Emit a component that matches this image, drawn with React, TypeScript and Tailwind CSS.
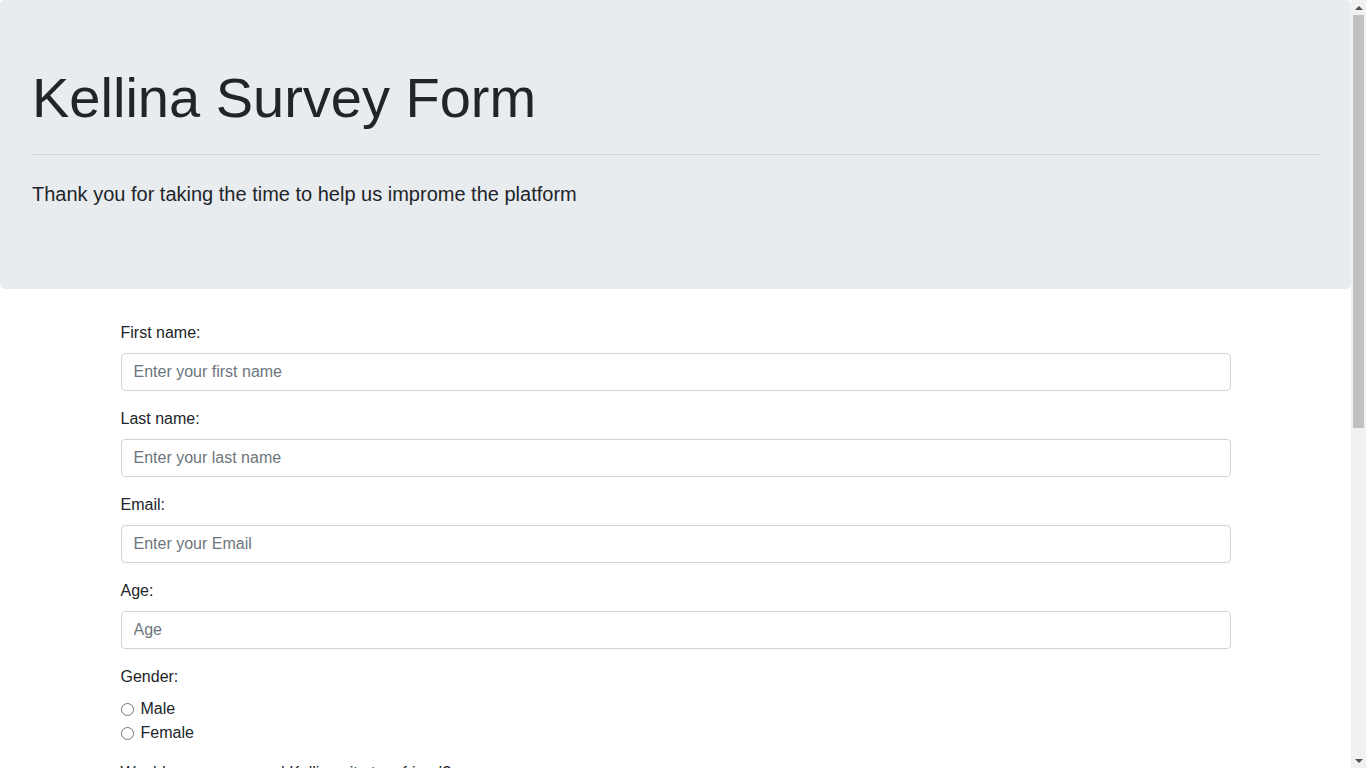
import { useState } from "react";

const inputClass =
    "block w-full h-[38px] px-3 py-1.5 text-base leading-6 text-[#495057] bg-white border border-[#ced4da] rounded-[4px] placeholder:text-[#6c757d] outline-none";

function Field({ label, placeholder, type = "text" }: { label: string; placeholder: string; type?: string }) {
    return (
        <div className="mb-4">
            <label className="inline-block mb-2 leading-6">{label}</label>
            <input type={type} placeholder={placeholder} className={inputClass} />
        </div>
    );
}

function Choice({ name, label, type = "radio" }: { name: string; label: string; type?: string }) {
    return (
        <div className="flex items-center h-6 leading-6">
            <input type={type} name={name} className="w-[13px] h-[13px] m-0 mr-[7px] accent-[#0075ff]" />
            <label>{label}</label>
        </div>
    );
}

// classic scrollbar on the right edge
function ScrollBar() {
    return (
        <div className="w-[15px] shrink-0 bg-[#f1f1f1] flex flex-col">
            <div className="h-[15px] flex items-center justify-center">
                <div className="w-0 h-0 border-x-[4px] border-x-transparent border-b-[4px] border-b-[#505050]" />
            </div>
            <div className="mx-[2px] h-[413px] bg-[#c1c1c1]" />
            <div className="flex-1" />
            <div className="h-[15px] flex items-center justify-center">
                <div className="w-0 h-0 border-x-[4px] border-x-transparent border-t-[4px] border-t-[#505050]" />
            </div>
        </div>
    );
}

export default function App() {
    const [feature, setFeature] = useState("");

    return (
        <div className="flex h-screen overflow-hidden bg-white text-[#212529] text-base font-['Liberation_Sans',Arial,sans-serif]">
            <div className="flex-1 min-w-0 overflow-y-auto [scrollbar-width:none]">
                <div className="bg-[#e9ecef] rounded-[5px] px-8 pt-16 pb-16 mb-8">
                    <h1 className="text-[56px] leading-[67px] font-light mb-2">Kellina Survey Form</h1>
                    <hr className="mt-[23px] mb-6 border-0 border-t border-[rgba(0,0,0,0.1)]" />
                    <p className="text-[20px] leading-[30px] font-light mb-4">
                        Thank you for taking the time to help us improme the platform
                    </p>
                </div>

                <div className="max-w-[1140px] mx-auto px-[15px] pb-12">
                    <form onSubmit={(e) => e.preventDefault()}>
                        <Field label="First name:" placeholder="Enter your first name" />
                        <Field label="Last name:" placeholder="Enter your last name" />
                        <Field label="Email:" placeholder="Enter your Email" type="email" />
                        <Field label="Age:" placeholder="Age" type="number" />

                        <div className="mb-4">
                            <label className="inline-block mb-2 leading-6">Gender:</label>
                            <Choice name="gender" label="Male" />
                            <Choice name="gender" label="Female" />
                        </div>

                        <div className="mb-4">
                            <label className="inline-block mb-2 leading-6">Would you recommend Kellina site to a friend?</label>
                            <Choice name="recommend" label="Definitely" />
                            <Choice name="recommend" label="Maybe" />
                            <Choice name="recommend" label="Not sure" />
                        </div>

                        <div className="mb-4">
                            <label className="inline-block mb-2 leading-6">What is your favorite feature of Kellina?</label>
                            <select
                                value={feature}
                                onChange={(e) => setFeature(e.target.value)}
                                className={inputClass}
                            >
                                <option value="">Select an option</option>
                                <option value="challenges">Challenges</option>
                                <option value="projects">Projects</option>
                                <option value="community">Community</option>
                                <option value="forum">Forum</option>
                            </select>
                        </div>

                        <div className="mb-4">
                            <label className="inline-block mb-2 leading-6">What would you like to see improved?</label>
                            <Choice type="checkbox" name="improve" label="Front-end Projects" />
                            <Choice type="checkbox" name="improve" label="Back-end Projects" />
                            <Choice type="checkbox" name="improve" label="Data Visualization" />
                            <Choice type="checkbox" name="improve" label="Challenges" />
                            <Choice type="checkbox" name="improve" label="Open Source Community" />
                        </div>

                        <div className="mb-4">
                            <label className="inline-block mb-2 leading-6">Any comments or suggestions?</label>
                            <textarea
                                rows={3}
                                placeholder="Enter your comment here..."
                                className="block w-full px-3 py-1.5 text-base leading-6 text-[#495057] border border-[#ced4da] rounded-[4px] placeholder:text-[#6c757d] outline-none"
                            />
                        </div>

                        <button
                            type="submit"
                            className="px-3 py-1.5 leading-6 text-white bg-[#007bff] border border-[#007bff] rounded-[4px]"
                        >
                            Submit
                        </button>
                    </form>
                </div>
            </div>
            <ScrollBar />
        </div>
    );
}
